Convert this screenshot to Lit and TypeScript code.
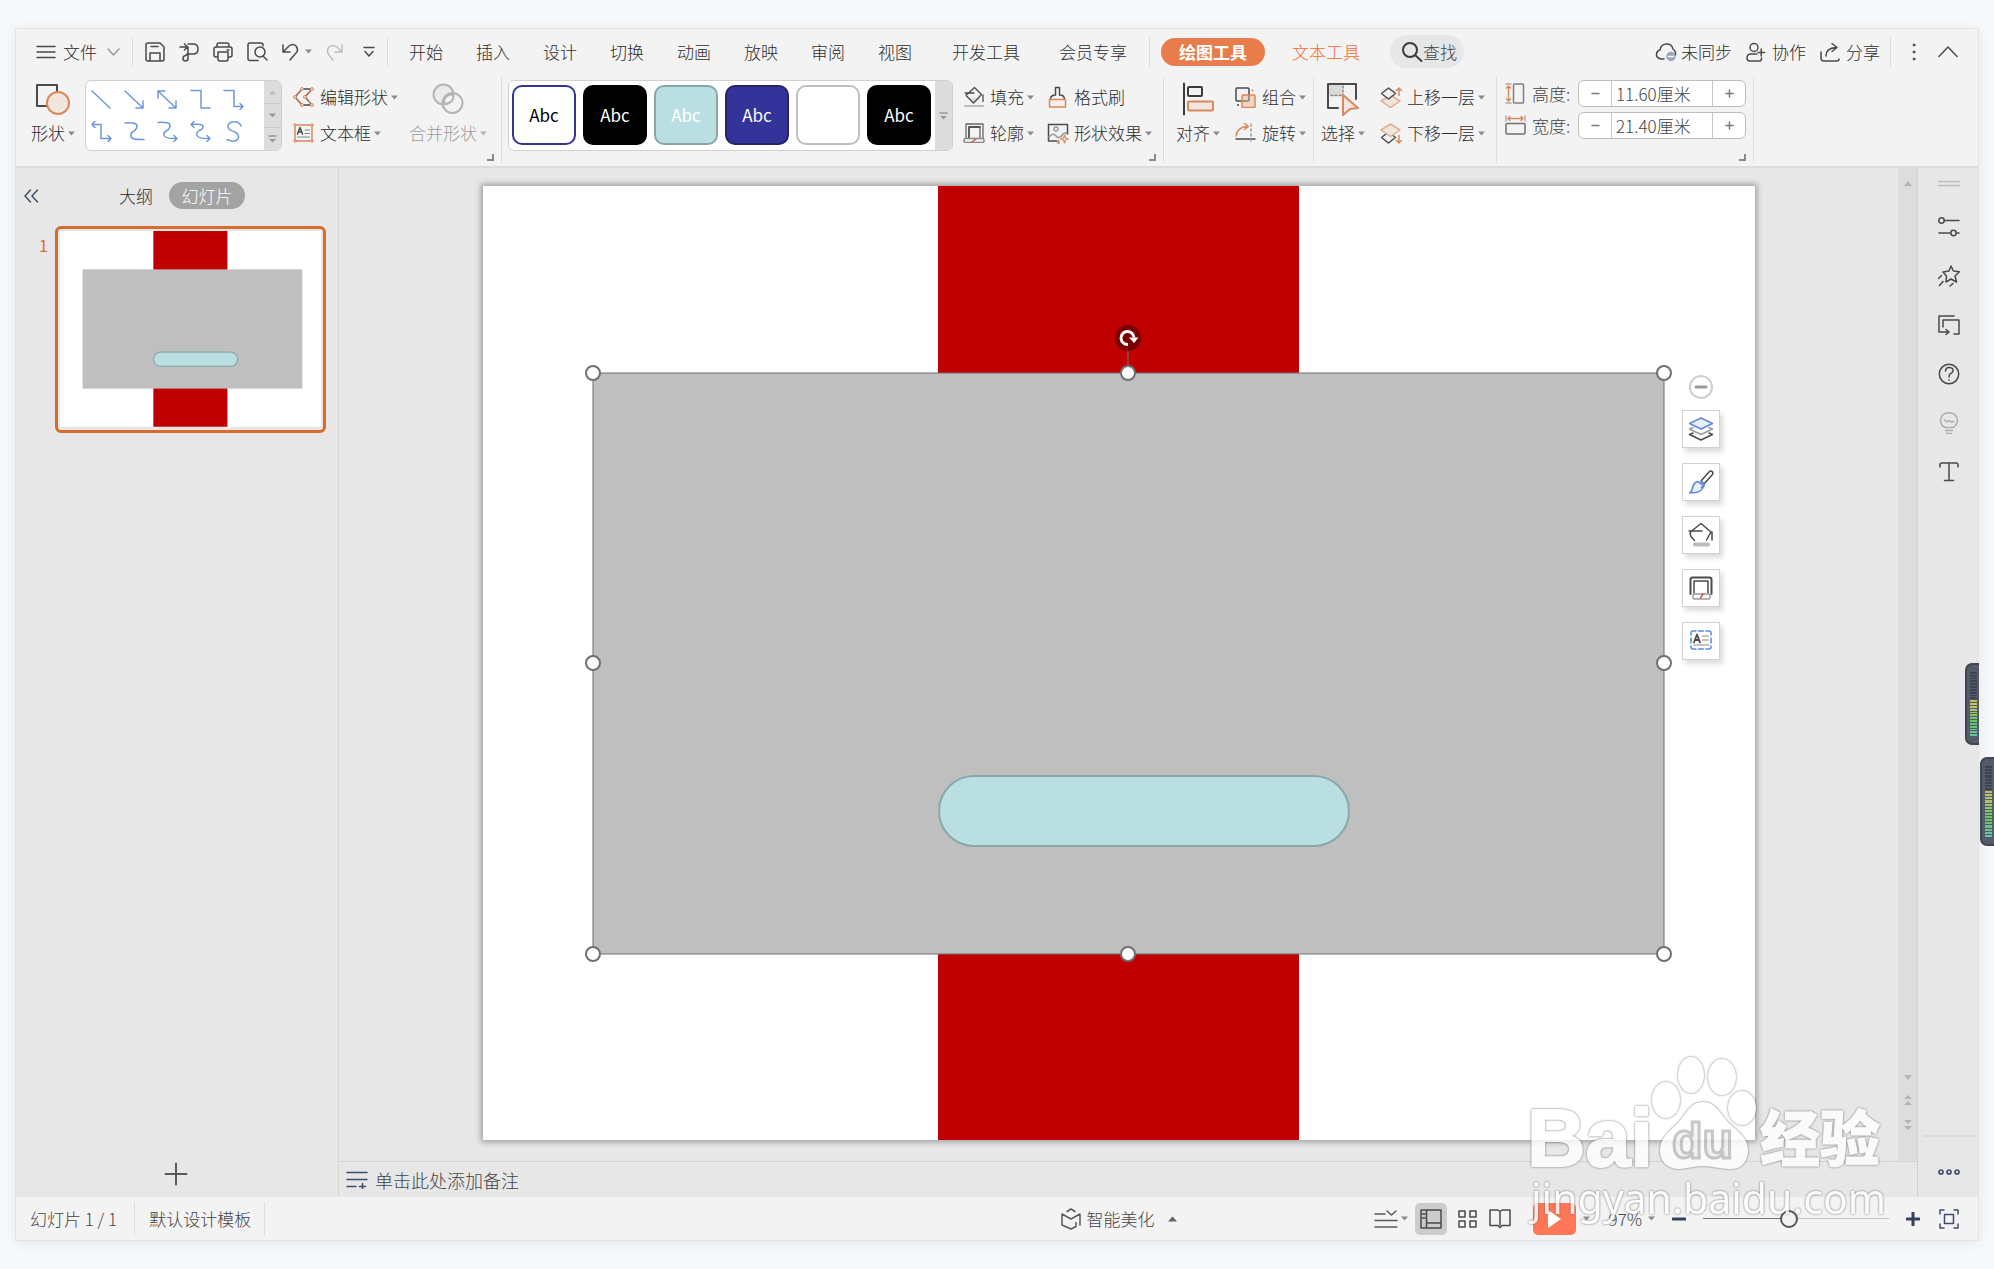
import { LitElement, html, css, svg, nothing, type TemplateResult, type SVGTemplateResult } from "lit";
import { customElement, property } from "lit/decorators.js";
import { classMap } from "lit/directives/class-map.js";

const DARK = "#4a4a4a";
const ORANGE = "#d9895a";
const BLUE = "#6f97dc";
const NAVY = "#414d68";

const icon = (w: number, h: number, body: SVGTemplateResult, color = DARK, stroke = 1.5) => html`
  <svg class="icon" width=${w} height=${h} viewBox="0 0 ${w} ${h}" fill="none" stroke=${color}
    stroke-width=${stroke} stroke-linejoin="round" stroke-linecap="round" aria-hidden="true">${body}</svg>`;

const caret = (color = "#8a8a8a") => html`
  <svg class="icon" width="7" height="5" viewBox="0 0 7 5" aria-hidden="true"><path d="M0 0.5h7L3.5 4.5z" fill=${color} /></svg>`;

const icons = {
  menu: icon(20, 14, svg`<path d="M1 1.500h18M1 7h18M1 12.500h18" />`),
  down: icon(13, 8, svg`<path d="M1 1l5.500 6L12 1" />`, "#999999"),
  save: icon(20, 20, svg`<path d="M1 3q0-2 2-2h12l4 4v12q0 2-2 2H3q-2 0-2-2zM5 19v-8h10v8M6 4.500h7" />`),
  output: icon(20, 20, svg`<path d="M1 5h7M5.500 2l3 3-3 3M9 2h5q5 0 5 5t-5 5H8M9 5v11.500q0 2.500-2.500 2.500T4 16.500 6.500 13.500L9 12" />`),
  print: icon(20, 20, svg`<path d="M4 5V3q0-2 2-2h8q2 0 2 2v2M4 15H3q-2 0-2-2V7q0-2 2-2h14q2 0 2 2v6q0 2-2 2h-1M5 10h10v7q0 2-2 2H7q-2 0-2-2zM14 8h2" />`),
  preview: icon(21, 20, svg`<path d="M11 18.500H3q-2 0-2-2V3q0-2 2-2h11q2 0 2 2v1" /><circle cx="13" cy="10" r="5" /><path d="M16 14l4 4" />`),
  undo: icon(18, 18, svg`<path d="M2 2v7h7M2 9l6-6q4-3 7 0 3 4 0 7l-6 7" />`),
  redo: icon(18, 18, svg`<path d="M16 2v7H9M16 9l-5-5q-4-3-8 0-3 4 0 8l4 5" />`, "#bdbdbd"),
  more: icon(12, 12, svg`<path d="M1 1.500h10M2 5.500l4 4.500 4-4.500" />`),
  search: icon(22, 22, svg`<circle cx="9" cy="9" r="7" /><path d="M14 14l6.500 6" />`, "#3c3c3c", 2),
  cloud: icon(22, 22, svg`<path d="M9 18H6q-5-1-4.500-5Q2 9.500 5 9q1-6 6.500-6T18 8q3 2 2.500 6" /><circle cx="16" cy="15.500" r="4.700" fill="#9aa5bb" stroke="none" /><path d="M13.500 15.500h5" stroke="#fff" />`),
  team: icon(22, 20, svg`<circle cx="8" cy="5.500" r="4" /><path d="M11 12H5q-4 0-4 4 0 3 3 3h10q2-1 1.500-3M12 10.500h6.500M15.200 7v7" />`),
  share: icon(22, 20, svg`<path d="M1 10v6q0 3 3 3h13q2 0 2-2M6 14q0-8 10-8.500M12 1.500l5 4-5 4" />`),
  kebab: icon(20, 20, svg`<circle cx="10" cy="3" r="1" fill=${DARK} /><circle cx="10" cy="10" r="1" fill=${DARK} /><circle cx="10" cy="17" r="1" fill=${DARK} />`, DARK, 1),
  up: icon(20, 12, svg`<path d="M1 10.500L10 1l9 9.500" />`),
  shapes: icon(34, 32, svg`<rect x="1" y="2" width="20" height="21" stroke=${DARK} stroke-width="2" /><circle cx="22" cy="20" r="11" fill="#f0e6df" />`, ORANGE, 2),
  editShape: icon(22, 20, svg`<path d="M9 2h10M9 18h10" stroke=${DARK} /><path d="M9 2L2 10l7 8M19 2l-7 8 7 8" stroke="#9a6c55" />
    ${[[9, 2], [19, 2], [2, 10], [12, 10], [9, 18], [19, 18]].map(([x, y]) => svg`<circle cx=${x} cy=${y} r="1.500" fill="#f4e6dc" stroke-width="1" />`)}`, ORANGE),
  textBox: icon(22, 20, svg`<rect x="2" y="2" width="17" height="16" /><path d="M4.500 11l2.500-6.500 2.500 6.500M5.500 9h3" stroke=${DARK} /><path d="M12 7h4.500M12 10.500h4.500M4.500 14h12" stroke="#888" stroke-width="1.200" />
    ${[[2, 2], [19, 2], [2, 18], [19, 18]].map(([x, y]) => svg`<circle cx=${x} cy=${y} r="1.200" fill="#f4e6dc" stroke-width="1" />`)}`, ORANGE),
  merge: icon(32, 32, svg`<circle cx="11.500" cy="11.500" r="10" fill="#ebebeb" /><circle cx="20.500" cy="20" r="10" /><path d="M21 11q2 9-9 10-1-9 9-10z" fill="#f3f3f3" />`, "#b5b5b5", 2),
  fill: icon(22, 22, svg`<path d="M5 12h13l-7 5.500z" fill="#ddd" stroke="none" /><path d="M11.500 1.500l7 7-8 8.500L3 9.500zM2 7h9M20 9v6.500" stroke-width="1.300" /><path d="M2 20h18" stroke="#bcbcbc" stroke-width="2" />`),
  outline: icon(22, 20, svg`<path d="M3 15V1h17v14M6 15V4h11v11" stroke="#666" stroke-width="1.300" /><path d="M6 15V4h11" stroke="#444" stroke-width="1.300" /><rect x="1" y="15.500" width="20" height="4" rx="1.500" stroke="#8a8a8a" /><path d="M9 19l4-3" stroke="#e05050" />`),
  painter: icon(22, 22, svg`<path d="M8.500 9V1.500h4V9q5 0 5 4.500M3.500 13.500Q3.500 9 8.500 9" /><path d="M2.500 13.500h16V21h-16z" stroke=${ORANGE} fill="#f5eee9" />`),
  effect: icon(22, 21, svg`<path d="M10 18H1.500V1.500h19V11" /><circle cx="9" cy="6" r="2" stroke="#999" /><path d="M2 14q4-5 7-1t7-2q2-2 4 0" stroke="#999" /><path d="M17.500 12l1 3 3 1-3 1-1 3-1-3-3-1 3-1zM11.500 17.500l1 2-1 1.500-1-1.500z" stroke=${ORANGE} stroke-width="1.200" />`),
  align: icon(34, 34, svg`<path d="M3 1.500v31" /><rect x="7" y="5" width="14" height="9" rx="1" /><rect x="7" y="19.500" width="25" height="9" rx="1" stroke=${ORANGE} fill="#f0e6df" />`, "#3c3c3c", 2),
  group: icon(22, 21, svg`<rect x="1" y="1" width="13" height="13" rx="1" /><rect x="7" y="8" width="13" height="12.500" rx="1" stroke=${ORANGE} fill="#e9b38f" fill-opacity=".45" /><path d="M17.500 3.500v.100" stroke=${ORANGE} stroke-width="2" /><path d="M3 18v.100" stroke-width="2" />`),
  rotate: icon(22, 21, svg`<path d="M1 13Q2 4 13 3.500M9.500 0.500l4 3-4 3" stroke=${ORANGE} /><path d="M1 16h19" /><path d="M16 1v19" stroke="#999" stroke-dasharray="2 3" />`),
  select: icon(34, 34, svg`<path d="M2 2h14v11H2z" fill="#d9d9d9" stroke="none" /><path d="M12 26H2V2h28v15" stroke-width="2" /><path d="M5 13.500h10M17 4v9" stroke="#888" stroke-dasharray="2 2" /><path d="M17 13l15 13-8 1-7 6z" stroke=${ORANGE} fill="#f0e6df" stroke-width="2" />`),
  forward: icon(22, 21, svg`<path d="M1 14l9.500-6 9.500 6-9.500 6.500z" stroke="#dfae8d" fill="#f0e4dc" /><path d="M1.500 6.500L8.500 1l7 5.500-7 5.500z" fill="#f3f3f3" /><path d="M19 8.500V1M16.500 3.500L19 1l2.500 2.500" stroke=${ORANGE} />`),
  backward: icon(22, 21, svg`<path d="M1.500 14.500l7-5.500 7 5.500-7 5.500z" /><path d="M1 7l9.500-6L20 7l-9.500 6.500z" stroke="#dfae8d" fill="#f0e4dc" /><path d="M19 12.500V20M16.500 17.500L19 20l2.500-2.500" stroke=${ORANGE} />`),
  heightI: icon(22, 21, svg`<path d="M1 1h5M1 20h5" stroke="#aaa" /><path d="M3.500 3v15M1.500 5l2-2 2 2M1.500 16l2 2 2-2" stroke=${ORANGE} /><rect x="8.500" y="1" width="10" height="19" rx="1" stroke="#808080" />`),
  widthI: icon(22, 21, svg`<path d="M1 1v5M20 1v5" stroke="#aaa" /><path d="M3 3.500h15M5 1.500l-2 2 2 2M16 1.500l2 2-2 2" stroke=${ORANGE} /><rect x="1" y="8.500" width="19" height="10.500" rx="1" stroke="#707070" />`),
  collapse: icon(16, 14, svg`<path d="M6.500 1L1 7l5.500 6M13.500 1L8 7l5.500 6" />`, NAVY),
  plus: icon(24, 24, svg`<path d="M12 1.500v21M1.500 12h21" />`, "#5a5a5a", 2),
  notes: icon(22, 18, svg`<path d="M1 1.500h20M1 8.500h20M1 15.500h9M13.500 15.500h6M16.500 12.500v5.500" />`, NAVY),
  beautify: icon(22, 22, svg`<path d="M7 3.500L11 1l4 2.500M2 6v11l9 4 5-2.500v-4M2 6l9 5 9-5v11" />`, "#5a5a5a"),
  viewList: icon(24, 20, svg`<path d="M1 5h10M1 11.500h22M1 18h22M13 2l4.500 4L22 2" />`, "#5a5a5a"),
  normalView: icon(22, 20, svg`<path d="M1 1h20v18H1zM6.500 1v18M6.500 14h14.500M2.500 5h2.500M2.500 9h2.500" />`),
  sorter: icon(20, 18, svg`<path d="M1 1h6v6H1zM12 1h6v6h-6zM1 11h6v6H1zM12 11h6v6h-6z" />`),
  reading: icon(22, 20, svg`<path d="M11 18.500L9 16.500H1V1h8l2 1.500L13 1h8v15.500h-8zM11 2.500V16" />`),
  zoomOut: icon(14, 4, svg`<path d="M1 2h12" />`, "#34415c", 3),
  zoomIn: icon(14, 14, svg`<path d="M1 7h12M7 1v12" />`, "#34415c", 3),
  fit: icon(20, 20, svg`<path d="M1 5V1h4M15 1h4v4M19 15v4h-4M5 19H1v-4M5.500 5.500h9v9h-9z" />`, NAVY),
  grip: icon(22, 8, svg`<path d="M0 1.500h22M0 5.500h22" />`, "#bcbcbc"),
  sliders: icon(22, 22, svg`<circle cx="3.500" cy="4.500" r="2.700" /><path d="M6.500 4.500H21M1 17h11.500M18.500 17H21" /><circle cx="15.500" cy="17" r="2.700" />`),
  star: icon(22, 22, svg`<path d="M13 1l2.500 5 6 .800-4.500 4.200 1.500 6-5.500-3-5 3 .500-6L5 7l6-1zM3.500 10.500l-3 3M5 16.500l-3.500 4M15 18.500l-3 2.500" />`),
  swap: icon(22, 22, svg`<path d="M16 2H1v16h9M8 15.500l3 2.500-3 2.500M5 13V6h16v14h-5" />`),
  help: icon(22, 22, svg`<circle cx="11" cy="11" r="9.700" /><path d="M7.500 8q.500-4 4-3.500 4 .500 3.500 3.500-.500 2-3 3-1 .800-1 3M11 17v.200" />`),
  bulb: icon(22, 22, svg`<path d="M7 15.500q-4.500-2.500-4.500-7Q3 1 11 0.800q8 .200 8.500 8Q19 13 15 15.500zM7.500 18.500h7M8.500 21.500h5M6.500 8l2.500 2 2-1.500 2 1.500 3-.500" />`, "#adadad"),
  text: icon(22, 22, svg`<path d="M2 6V4q0-2 2-2h14q2 0 2 2v2M11 2v17.500M6.500 19.500h9" />`),
  dots: icon(22, 6, svg`<circle cx="3" cy="3" r="2" /><circle cx="11" cy="3" r="2" /><circle cx="19" cy="3" r="2" />`, NAVY, 1.7),
  layers: icon(26, 26, svg`<path d="M5 17l-3.500 1.500L13 24l11.500-5.500L21 17" /><path d="M5 11.500L1.500 13 13 18.500 24.500 13 21 11.500" stroke="#9a9a9a" /><path d="M1.500 7.500L13 2l11.500 5.500L13 13z" stroke="#5b8ae0" fill="#e8f0fd" />`),
  brush: icon(26, 26, svg`<path d="M13 12l8-9q2-2 3.500 0 1 1.500-.500 3l-8 9z" /><path d="M9.500 12.500l4 2.500 2.500 2q-3 6-8 6.500l-6.500.500q3-2 3-5 1-5 5-6.500z" stroke="#5b8ae0" fill="#e8f0fd" /><path d="M13 12l3.500 3.500-3 3" stroke="#5b8ae0" />`),
  bucket: icon(26, 26, svg`<path d="M6.500 18.500L3 14.500q-1.500-3 0-5L13 1.500l10 8.500-4.500 8M1 9h13M24 10v8" /><path d="M7 22.500h13" stroke="#bcbcbc" stroke-width="4" />`),
  frame: icon(26, 26, svg`<path d="M2.500 19V4.500q0-2 2-2h17q2 0 2 2V19" stroke-width="2" /><path d="M6 18V6h14v12" stroke-width="1.500" /><rect x="5" y="19" width="17" height="5" rx="1.500" stroke="#999" /><path d="M12.500 23l2.500-4" stroke="#e05050" />`),
  textArea: icon(26, 26, svg`<path d="M3 7V5q0-2 2-2h3M10.500 3h5M18 3h3q2 0 2 2v2M23 10v5M23 18v1q0 2-2 2h-3M15.500 21h-5M8 21H5q-2 0-2-2v-1M3 15v-5" stroke="#5b8ae0" /><path d="M6 14.500l3-8 3 8M7 12h4" stroke-width="1.800" /><path d="M14.500 8h6M14.500 12h6M6 17h15" stroke="#888" stroke-width="1.200" />`),
};

/** Line and connector glyphs of the shape gallery, two rows of five. */
const connectors: SVGTemplateResult[] = [
  svg`<path d="M1 2l18 17" />`,
  svg`<path d="M1 2l18 17M12 19h7v-7" />`,
  svg`<path d="M1 2l18 17M12 19h7v-7M1 9V2h7" />`,
  svg`<path d="M1 1.500h10v17.500h9" />`,
  svg`<path d="M1 1.500h10v16h9M17 14.500l3 3-3 3" />`,
  svg`<path d="M1 3.500h9v14h10M17 14.500l3 3-3 3M4 .500l-3 3 3 3" />`,
  svg`<path d="M1 2q12-1 12 3 0 3-3 5-4 2-3 6 2 3 13 2.500" />`,
  svg`<path d="M1 1.500q12-1 12 3 0 3-3 5-4 2-3 5 2 3.500 13 3M17 14.500l3 3-3 3" />`,
  svg`<path d="M1 3.500q12-1 12 2t-4 4q-3 2-2 5 2 3.500 13 3M17 14.500l3 3-3 3M4 .500l-3 3 3 3" />`,
  svg`<path d="M18 5q-2-5-9-4-6 2-3 7 2 2 6 3 5 3 3 7-3 4-11 .500" />`,
];

const quickStyles = ["outline", "black", "teal", "indigo", "blank", "black"];

/** The slide's own artwork, shared by the stage and the thumbnail. */
const artwork = svg`
  <rect width="1272" height="954" fill="#fff" />
  <rect x="455" width="361" height="954" fill="#c00000" />
  <rect x="110" y="187" width="1071" height="581" fill="#bfbfbf" />
  <rect class="pill" x="456" y="590" width="410" height="70" rx="35" fill="#badfe2" stroke="#87a8ab" stroke-width="2" />`;

const handles = [[110, 187], [645, 187], [1181, 187], [110, 477], [1181, 477], [110, 768], [645, 768], [1181, 768]];

@customElement("level-meter")
class LevelMeter extends LitElement {
  @property({ type: Number }) off = 9;
  @property({ type: Number }) on = 12;
  static styles = css`
    :host { display: block; box-sizing: border-box; background: #545c6c; border: 2px solid #3f4552; border-right: 0; border-radius: 7px 0 0 7px; padding: 7px 2px 7px 3px; }
    .bars { display: flex; flex-direction: column; gap: 1px; height: 100%; }
    .bar { flex: 1; background: #3d434f; }
    .lit { background: hsl(var(--hue), 45%, 58%); }
  `;
  render() {
    const total = this.off + this.on;
    return html`<div class="bars">${Array.from({ length: total }, (_, i) => i < this.off
      ? html`<div class="bar"></div>`
      : html`<div class="bar lit" style="--hue:${50 + ((i - this.off) / this.on) * 120}"></div>`)}</div>`;
  }
}

@customElement("app-root")
class AppRoot extends LitElement {
  static styles = css`
    :host { display: block; height: 100vh; box-sizing: border-box; padding: 28px 15px; background: #f6f8fa; position: relative; overflow: hidden;
      font: 300 17px/24px "Noto Sans CJK SC", "Noto Sans", sans-serif; color: #2c2c2c; }
    * { box-sizing: border-box; }
    button, input { font: inherit; color: inherit; background: none; border: 0; padding: 0; margin: 0; }
    button { display: flex; align-items: center; white-space: nowrap; }
    .icon { display: block; flex: none; }
    .window { height: 100%; display: flex; flex-direction: column; background: #f3f3f3; border: 1px solid #e2e3e4; box-shadow: 0 2px 12px rgba(0, 0, 0, .07); }
    .sep { width: 1px; background: #dedede; flex: none; }

    .menubar { display: flex; align-items: center; height: 47px; padding: 0 20px 2px; flex: none; }
    .menubar .sep { height: 30px; }
    .file { gap: 7px; padding-right: 12px; }
    .file .icon:last-child { margin-left: 3px; }
    .quick { display: flex; align-items: center; gap: 14px; padding: 0 8px 0 12px; }
    .quick button { width: 20px; justify-content: center; }
    .quick .split { width: 30px; gap: 6px; }
    .tabs { display: flex; gap: 1px; padding-left: 5px; }
    .tab { width: 66px; justify-content: center; }
    .wide { width: 106px; }
    .tabs + .sep { margin: 0 11px 0 3px; }
    .current { width: 104px; height: 28px; border-radius: 14px; background: #e87c4b; color: #fff; font-weight: 700; margin-right: 8px; }
    .context { color: #f56a2f; margin-right: 11px; }
    .find { height: 33px; border-radius: 17px; background: #e5e7e9; padding: 0 7px 0 11px; color: #444; }
    .account { display: flex; align-items: center; margin-left: auto; gap: 14px; }
    .account button { gap: 4px; }
    .account .sep { margin: 0 -1px 0 -4px; }

    .ribbon { display: flex; height: 92px; border-bottom: 2px solid #dcdcdc; flex: none; }
    .ribbon > .sep { margin: 1px 0 3px; }
    .group { display: flex; position: relative; padding-top: 3px; flex: none; }
    .g-shape { padding-left: 15px; padding-right: 14px; }
    .g-shape .gallery { margin-left: 10px; margin-right: 11px; }
    .g-shape .stack { margin-right: 11px; }
    .g-style { padding-left: 6px; padding-right: 11px; }
    .g-style .gallery { margin-right: 10px; }
    .g-style .stack:nth-child(2) { margin-right: 13px; }
    .g-align { padding-left: 12px; padding-right: 7px; }
    .g-order { padding-left: 7px; padding-right: 11px; }
    .g-align .stack, .g-order .stack { margin-left: 15px; }
    .g-size { padding: 4px 7px 0 8px; flex-direction: column; gap: 5px; }
    .big { flex-direction: column; height: 68px; }
    .big .art { height: 40px; display: flex; align-items: center; }
    .big .cap, .cmd { gap: 3px; }
    .big .cap { display: flex; align-items: center; height: 28px; }
    .off { color: #9c9c9c; }
    .stack { display: flex; flex-direction: column; }
    .cmd { height: 36px; }
    .cmd .pic { width: 24px; }
    .gallery { display: flex; height: 71px; margin-top: 1px; border: 1px solid #cfcfcf; border-radius: 6px; background: #fff; overflow: hidden; }
    .lines { display: grid; grid-template-columns: repeat(5, 33px); grid-template-rows: repeat(2, 32px); padding: 2px 8px 0 5px; }
    .lines button { width: 22px; }
    .scroller { display: flex; flex-direction: column; width: 17px; background: #dcdcdc; }
    .scroller button { flex: 1; justify-content: center; width: 100%; border-bottom: 1px solid #cacaca; }
    .scroller button:last-child { border: 0; }
    .looks { display: flex; gap: 7px; padding: 4px 4px 4px 3px; }
    .look { width: 64px; height: 60px; justify-content: center; border-radius: 10px; border: 2px solid #000; font-weight: 400; background: #000; color: #fff; }
    .look.outline { background: #fff; border-color: #333399; color: #000; }
    .look.teal { background: #badfe2; border-color: #87a8ab; }
    .look.indigo { background: #333399; border-color: #24246c; }
    .look.blank { background: #fff; border-color: #bfbfbf; }
    .launch { position: absolute; right: 7px; bottom: 5px; width: 7px; height: 7px; border: solid #8a8a8a; border-width: 0 2px 2px 0; }
    .size { display: flex; align-items: center; height: 27px; }
    .size .pic { width: 27px; }
    .size label { width: 46px; color: #444; }
    .spin { display: flex; width: 168px; height: 27px; border: 1px solid #bdbdbd; border-radius: 6px; background: #fff; overflow: hidden; }
    .spin button { width: 32px; justify-content: center; }
    .spin input { flex: 1; min-width: 0; border: solid #c8c8c8; border-width: 0 1px; padding-left: 4px; color: #444; }

    .body { display: flex; flex: 1; min-height: 0; background: #e7e7e7; }
    .outline-pane { width: 323px; border-right: 1px solid #d6d6d6; display: flex; flex-direction: column; flex: none; }
    .pane-head { display: flex; align-items: center; padding: 14px 9px 0 8px; height: 41px; }
    .pane-head .views { display: flex; align-items: center; padding-left: 79px; gap: 16px; }
    .pane-head .on { height: 27px; border-radius: 14px; width: 76px; justify-content: center; background: #a3a3a3; color: #fff; }
    .thumb-row { display: flex; padding: 17px 12px 0 23px; gap: 6px; align-items: flex-start; }
    .thumb-row .no { width: 10px; color: #d96b2d; line-height: 38px; font-size: 16px; font-weight: 400; }
    .thumb { flex: 1; display: block; border: 3px solid #d96b2d; border-radius: 6px; padding: 2px 2px 3px; }
    .thumb svg { display: block; width: 100%; }
    .thumb .pill { stroke-width: 6px; }
    .add { margin: auto 0 11px; padding-right: 3px; align-self: center; }

    .center { flex: 1; min-width: 0; display: flex; flex-direction: column; }
    .work { flex: 1; min-height: 0; display: flex; }
    .canvas { flex: 1; min-width: 0; display: flex; justify-content: center; padding: 18px 0 21px; }
    .slide { height: 100%; aspect-ratio: 4 / 3; position: relative; box-shadow: 0 0 6px 2px rgba(0, 0, 0, .32); }
    .slide > svg { display: block; width: 100%; height: 100%; }
    .float { position: absolute; top: 19.8%; right: 35px; display: flex; flex-direction: column; align-items: center; gap: 15px; }
    .float button { width: 38px; height: 38px; justify-content: center; background: #fff; border: 1px solid #d2d2d2; box-shadow: 3px 4px 5px rgba(0, 0, 0, .14); }
    .float .shut { width: 24px; height: 24px; border: 2px solid #cfcfcf; border-radius: 50%; box-shadow: none; margin-bottom: -4px; }
    .vbar { width: 20px; background: #dddddd; border-right: 1px solid #d2d2d2; display: flex; flex-direction: column; align-items: center; gap: 15px; padding: 13px 0 31px; }
    .vbar button:nth-child(2) { margin-top: auto; }
    .memo { height: 36px; border-top: 1px solid #d3d3d3; border-right: 1px solid #d2d2d2; display: flex; align-items: center; gap: 7px; padding-left: 7px; font-size: 18px; color: #444; flex: none; }
    .side { width: 60px; display: flex; flex-direction: column; align-items: center; padding: 12px 3px 22px 5px; flex: none; }
    .side .tools { display: flex; flex-direction: column; gap: 27px; padding-top: 28px; }
    .side .rest { margin-top: auto; border-top: 2px solid #dcdcdc; width: 100%; padding-top: 32px; display: flex; justify-content: center; }

    .status { height: 43px; display: flex; align-items: center; flex: none; color: #444; padding-right: 19px; }
    .status > .sep { height: 34px; }
    .status .page { padding: 0 17px 0 14px; }
    .status .tpl { padding: 0 13px 0 14px; }
    .status .beauty { margin: 0 197px 0 auto; gap: 5px; }
    .status .beauty .icon:last-child { margin-left: 8px; }
    .modes { display: flex; align-items: center; gap: 11px; }
    .modes .pair { gap: 3px; margin-right: -4px; }
    .modes .on { width: 32px; height: 32px; border-radius: 5px; background: #cccccc; justify-content: center; }
    .play { width: 43px; height: 32px; border-radius: 5px; background: #ff7757; justify-content: center; }
    .modes .start { display: flex; align-items: center; gap: 7px; margin-left: 11px; }
    .zoom { display: flex; align-items: center; gap: 17px; padding-left: 19px; }
    .zoom .pct { gap: 6px; }
    .zoom input { appearance: none; width: 186px; height: 18px; background: linear-gradient(90deg, #777 47%, #c4c4c4 47%) center / 100% 1px no-repeat; }
    .zoom input::-webkit-slider-thumb { appearance: none; width: 18px; height: 18px; border-radius: 50%; border: 2px solid #555; background: #f3f3f3; }
    .zoom button:last-child { margin-left: 2px; }

    .meter-a, .meter-b { position: absolute; right: 15px; top: 663px; width: 14px; height: 82px; }
    .meter-b { right: 0; top: 757px; width: 14px; height: 89px; }
    .mark { position: absolute; right: 100px; bottom: 34px; width: 370px; height: 185px; pointer-events: none; filter: drop-shadow(0 0 1px rgba(70, 70, 70, .9)); opacity: .82; }
    .mark .logo { font: 700 81px "Liberation Sans", sans-serif; stroke: #fff; stroke-width: 2px; }
    .mark .du { font: 700 50px "Liberation Sans", sans-serif; fill: #f4f4f4; stroke: #bdbdbd; stroke-width: 3px; }
    .mark .han { font: 900 60px "Noto Sans CJK SC", sans-serif; stroke: #fff; stroke-width: 1px; }
    .mark .url { font: 400 41px "Noto Sans", sans-serif; }
  `;

  private cmd(pic: TemplateResult, label: string, drop = true) {
    return html`<button class="cmd"><span class="pic">${pic}</span>${label}${drop ? caret() : nothing}</button>`;
  }

  private big(pic: TemplateResult, label: string, off = false) {
    return html`<button class=${classMap({ big: true, off })} ?disabled=${off}>
      <span class="art">${pic}</span><span class="cap">${label}${caret(off ? "#b5b5b5" : undefined)}</span></button>`;
  }

  private size(id: string, pic: TemplateResult, label: string, value: string) {
    return html`<div class="size"><span class="pic">${pic}</span><label for=${id}>${label}:</label>
      <div class="spin"><button aria-label="减小${label}">${icon(9, 9, svg`<path d="M1 4.500h7" />`, "#777")}</button>
        <input id=${id} .value=${value} />
        <button aria-label="增大${label}">${icon(9, 9, svg`<path d="M1 4.500h7M4.500 1v7" />`, "#777")}</button></div></div>`;
  }

  private menubar() {
    return html`<header class="menubar">
      <button class="file">${icons.menu}文件${icons.down}</button><i class="sep"></i>
      <div class="quick">
        <button aria-label="保存">${icons.save}</button><button aria-label="输出">${icons.output}</button>
        <button aria-label="打印">${icons.print}</button><button aria-label="打印预览">${icons.preview}</button>
        <button class="split" aria-label="撤销">${icons.undo}${caret()}</button>
        <button aria-label="恢复">${icons.redo}</button><button aria-label="更多">${icons.more}</button>
      </div><i class="sep"></i>
      <nav class="tabs">${["开始", "插入", "设计", "切换", "动画", "放映", "审阅", "视图"].map((t) => html`<button class="tab">${t}</button>`)}</nav>
      <nav class="tabs">${["开发工具", "会员专享"].map((t) => html`<button class="tab wide">${t}</button>`)}</nav><i class="sep"></i>
      <button class="tab current">绘图工具</button><button class="tab wide context">文本工具</button>
      <button class="find">${icons.search}查找</button>
      <div class="account">
        <button>${icons.cloud}未同步</button><button>${icons.team}协作</button><button>${icons.share}分享</button>
        <i class="sep"></i><button aria-label="选项">${icons.kebab}</button><button aria-label="折叠功能区">${icons.up}</button>
      </div>
    </header>`;
  }

  private ribbon() {
    const launch = html`<button class="launch" aria-label="更多设置"></button>`;
    const drop = icon(9, 8, svg`<path d="M1 1h7" /><path d="M1 4h7L4.500 7.500z" fill="#999" stroke="none" />`, "#999");
    return html`<section class="ribbon">
      <div class="group g-shape">
        ${this.big(icons.shapes, "形状")}
        <div class="gallery">
          <div class="lines">${connectors.map((c) => html`<button aria-label="线条">${icon(21, 21, c, BLUE)}</button>`)}</div>
          <div class="scroller">
            <button aria-label="上一行"><svg class="icon" width="7" height="5"><path d="M0 4.500h7L3.500 .5z" fill="#bbb" /></svg></button>
            <button aria-label="下一行">${caret("#999")}</button><button aria-label="全部形状">${drop}</button>
          </div>
        </div>
        <div class="stack">${this.cmd(icons.editShape, "编辑形状")}${this.cmd(icons.textBox, "文本框")}</div>
        ${this.big(icons.merge, "合并形状", true)}${launch}
      </div><i class="sep"></i>
      <div class="group g-style">
        <div class="gallery">
          <div class="looks">${quickStyles.map((s) => html`<button class="look ${s}" aria-label="形状样式">${s === "blank" ? nothing : "Abc"}</button>`)}</div>
          <div class="scroller"><button aria-label="全部样式">${drop}</button></div>
        </div>
        <div class="stack">${this.cmd(icons.fill, "填充")}${this.cmd(icons.outline, "轮廓")}</div>
        <div class="stack">${this.cmd(icons.painter, "格式刷", false)}${this.cmd(icons.effect, "形状效果")}</div>${launch}
      </div><i class="sep"></i>
      <div class="group g-align">
        ${this.big(icons.align, "对齐")}
        <div class="stack">${this.cmd(icons.group, "组合")}${this.cmd(icons.rotate, "旋转")}</div>
      </div><i class="sep"></i>
      <div class="group g-order">
        ${this.big(icons.select, "选择")}
        <div class="stack">${this.cmd(icons.forward, "上移一层")}${this.cmd(icons.backward, "下移一层")}</div>
      </div><i class="sep"></i>
      <div class="group g-size">
        ${this.size("shape-h", icons.heightI, "高度", "11.60厘米")}${this.size("shape-w", icons.widthI, "宽度", "21.40厘米")}${launch}
      </div><i class="sep"></i>
    </section>`;
  }

  private body() {
    const tri = (d: string, h: number, label: string) => html`<button aria-label=${label}>
      <svg class="icon" width="8" height=${h} viewBox="0 0 8 ${h}"><path d=${d} fill="#b4b4b4" /></svg></button>`;
    return html`<main class="body">
      <aside class="outline-pane">
        <div class="pane-head"><button aria-label="收起窗格">${icons.collapse}</button>
          <div class="views"><button>大纲</button><button class="on">幻灯片</button></div></div>
        <div class="thumb-row"><span class="no">1</span>
          <button class="thumb" aria-label="第 1 张幻灯片"><svg viewBox="0 0 1272 954">${artwork}</svg></button></div>
        <button class="add" aria-label="新建幻灯片">${icons.plus}</button>
      </aside>
      <section class="center">
        <div class="work">
          <div class="canvas"><div class="slide">
            <svg viewBox="0 0 1272 954">${artwork}
              <rect x="110" y="187" width="1071" height="581" fill="none" stroke="#6f6f6f" />
              <path d="M645 165v16" stroke="#777" />
              ${handles.map(([x, y]) => svg`<circle cx=${x} cy=${y} r="7" fill="#fff" stroke="#707070" stroke-width="2" />`)}
              <circle cx="645" cy="152" r="13" fill="#780000" />
              <path d="M645 158.500a6.500 6.500 0 1 1 6-7" fill="none" stroke="#fff" stroke-width="3" /><path d="M646 151.500h9.500l-4.500 5.500z" fill="#fff" />
            </svg>
            <div class="float">
              <button class="shut" aria-label="收起">${icon(14, 4, svg`<path d="M2 2h10" />`, "#9a9a9a", 3)}</button>
              <button aria-label="图层">${icons.layers}</button><button aria-label="样式">${icons.brush}</button>
              <button aria-label="填充">${icons.bucket}</button><button aria-label="轮廓">${icons.frame}</button>
              <button aria-label="文字">${icons.textArea}</button>
            </div>
          </div></div>
          <div class="vbar">
            ${tri("M0 5h8L4 0z", 5, "向上滚动")}${tri("M0 0h8L4 5z", 5, "向下滚动")}
            ${tri("M0 4h8L4 0zM0 10h8L4 6z", 10, "上一张")}${tri("M0 0h8L4 4zM0 6h8L4 10z", 10, "下一张")}
          </div>
        </div>
        <div class="memo">${icons.notes}<span>单击此处添加备注</span></div>
      </section>
      <aside class="side">${icons.grip}
        <div class="tools">${[icons.sliders, icons.star, icons.swap, icons.help, icons.bulb, icons.text].map((i) => html`<button aria-label="侧栏工具">${i}</button>`)}</div>
        <div class="rest"><button aria-label="更多工具">${icons.dots}</button></div>
      </aside>
    </main>`;
  }

  private status() {
    return html`<footer class="status">
      <span class="page">幻灯片 1 / 1</span><i class="sep"></i><span class="tpl">默认设计模板</span><i class="sep"></i>
      <button class="beauty">${icons.beautify}智能美化<svg class="icon" width="9" height="6"><path d="M0 5.500h9L4.500 .5z" fill="#666" /></svg></button>
      <div class="modes">
        <button class="pair" aria-label="显示选项">${icons.viewList}${caret()}</button>
        <button class="on" aria-label="普通视图">${icons.normalView}</button>
        <button aria-label="幻灯片浏览">${icons.sorter}</button><button aria-label="阅读视图">${icons.reading}</button>
        <div class="start"><button class="play" aria-label="播放"><svg class="icon" width="13" height="18"><path d="M0 0l13 9-13 9z" fill="#fff" /></svg></button>${caret()}</div>
      </div>
      <div class="zoom">
        <button class="pct">97%${caret()}</button><button aria-label="缩小">${icons.zoomOut}</button>
        <input type="range" aria-label="缩放" min="0" max="100" .value=${"46"} />
        <button aria-label="放大">${icons.zoomIn}</button><button aria-label="适应窗口">${icons.fit}</button>
      </div>
    </footer>`;
  }

  render() {
    return html`<div class="window">${this.menubar()}${this.ribbon()}${this.body()}${this.status()}</div>
      <level-meter class="meter-a" off="10" on="13"></level-meter>
      <level-meter class="meter-b" off="8" on="15"></level-meter>
      <svg class="mark" viewBox="1524 1050 370 185" fill="#fff">
        <text class="logo" x="1527" y="1166">Bai</text>
        <ellipse cx="1666" cy="1100" rx="14" ry="18" /><ellipse cx="1691" cy="1075" rx="13" ry="18" />
        <ellipse cx="1722" cy="1077" rx="14" ry="18" /><ellipse cx="1742" cy="1108" rx="14" ry="17" />
        <path d="M1703 1102c14 0 18 14 28 23 12 10 18 17 17 27-1 12-9 18-19 17-10 0-16-3-26-3s-16 3-24 3c-12 0-19-8-19-18 0-12 7-18 15-25 10-9 14-24 28-24z" />
        <text class="du" x="1672" y="1158">du</text>
        <text class="han" x="1760" y="1161">经验</text>
        <text class="url" x="1531" y="1214">jingyan.baidu.com</text>
      </svg>`;
  }
}
